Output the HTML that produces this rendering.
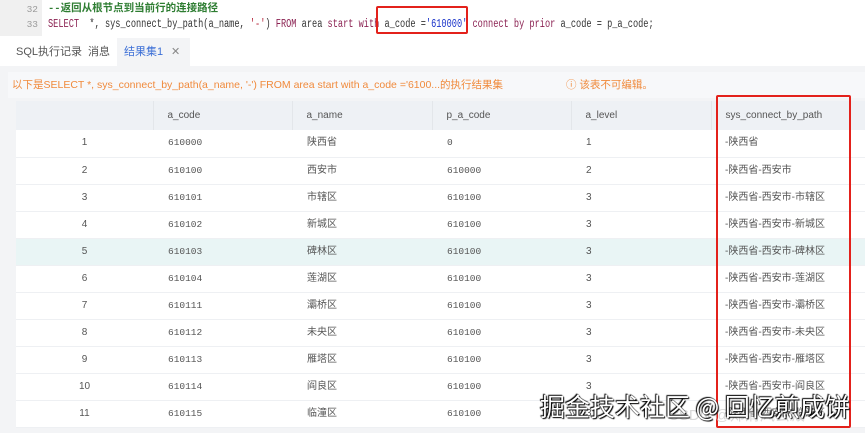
<!DOCTYPE html><html><head><meta charset="utf-8"><style>
*{margin:0;padding:0;box-sizing:border-box}
body{width:865px;height:433px;overflow:hidden;background:#f3f4f6;font-family:"Liberation Sans","Noto Sans CJK SC",sans-serif;position:relative}
.code{position:absolute;left:0;top:0;width:865px;height:36px;background:#fff;font-family:"Liberation Mono","Noto Sans CJK SC",monospace;font-size:10.5px}
.ln{position:absolute;left:0;top:0;width:42px;height:36px;background:#f0f0f0;color:#999;text-align:right;padding-right:4px;font-size:9.5px}
.l{position:absolute;left:48px;height:15px;line-height:15px;white-space:pre;color:#333;transform:scaleX(0.75);transform-origin:0 0;font-size:11.5px}
.tabs{position:absolute;left:0;top:36px;width:865px;height:30px;background:#fff;font-size:11px;color:#555}
.tabs span{position:absolute;top:9px;line-height:14px}
.msg{position:absolute;left:8px;top:72px;width:857px;height:26px;background:#f7f8fa;font-size:10.5px;color:#f08a3c;line-height:26px}
table{position:absolute;left:16px;top:101px;width:849px;border-collapse:collapse;font-size:10px;color:#555;background:#fff;table-layout:fixed}
td{height:27px;border-bottom:1px solid #eef0f3;line-height:12px;vertical-align:middle}
th{height:29px;background:#eef1f5;font-weight:normal;text-align:left;color:#555;border-left:1px solid #e3e6ea;line-height:12px}
.mono{font-family:"Liberation Mono",monospace;font-size:9.5px}
tr.hl td{background:#e9f5f5}
.box{position:absolute;border:2px solid #e3211b;border-radius:2px}
.wm{position:absolute;left:540px;top:388px;font-size:25px;color:#fff;font-family:"Noto Sans CJK SC",sans-serif;text-shadow:0 0 1px #000,1px 1px 1px #000,-1px -1px 1px #000;white-space:nowrap}
</style></head><body>
<div class="code"><div class="ln"><div style="height:15px;line-height:15px;margin-top:2px">32</div><div style="height:15px;line-height:15px">33</div></div>
<div class="l" style="top:2px;color:#2e7d32;font-weight:bold;transform:none;font-size:10.5px">--返回从根节点到当前行的连接路径</div>
<div class="l" style="top:17px"><span style="color:#8b2252">SELECT</span>  *, sys_connect_by_path(a_name, <span style="color:#b5253a">'-'</span>) <span style="color:#8b2252">FROM</span> area <span style="color:#8b2252">start with</span> a_code =<span style="color:#1a33c9">'610000'</span> <span style="color:#8b2252">connect by prior</span> a_code = p_a_code;</div></div>
<div class="tabs"><span style="left:16px">SQL执行记录</span><span style="left:88px">消息</span><div style="position:absolute;left:117px;top:2px;width:73px;height:28px;background:#f3f4f6"></div><span style="left:124px;color:#3c6fd6">结果集1</span><span style="left:171px;color:#888">✕</span></div>
<div class="msg"><span style="position:absolute;left:4px">以下是SELECT *, sys_connect_by_path(a_name, '-') FROM area start with a_code ='6100...的执行结果集</span><span style="position:absolute;left:558px">ⓘ 该表不可编辑。</span></div>
<table>
<tr><th style="width:137px;border-left:none"></th><th style="width:139px;padding-left:14px">a_code</th><th style="width:140px;padding-left:14px">a_name</th><th style="width:139px;padding-left:14px">p_a_code</th><th style="width:140px;padding-left:14px">a_level</th><th style="padding-left:14px">sys_connect_by_path</th></tr>
<tr><td style="text-align:center">1</td><td class="mono" style="padding-left:15px">610000</td><td style="padding-left:15px">陕西省</td><td class="mono" style="padding-left:15px">0</td><td style="padding-left:15px">1</td><td style="padding-left:14px">-陕西省</td></tr>
<tr><td style="text-align:center">2</td><td class="mono" style="padding-left:15px">610100</td><td style="padding-left:15px">西安市</td><td class="mono" style="padding-left:15px">610000</td><td style="padding-left:15px">2</td><td style="padding-left:14px">-陕西省-西安市</td></tr>
<tr><td style="text-align:center">3</td><td class="mono" style="padding-left:15px">610101</td><td style="padding-left:15px">市辖区</td><td class="mono" style="padding-left:15px">610100</td><td style="padding-left:15px">3</td><td style="padding-left:14px">-陕西省-西安市-市辖区</td></tr>
<tr><td style="text-align:center">4</td><td class="mono" style="padding-left:15px">610102</td><td style="padding-left:15px">新城区</td><td class="mono" style="padding-left:15px">610100</td><td style="padding-left:15px">3</td><td style="padding-left:14px">-陕西省-西安市-新城区</td></tr>
<tr class="hl"><td style="text-align:center">5</td><td class="mono" style="padding-left:15px">610103</td><td style="padding-left:15px">碑林区</td><td class="mono" style="padding-left:15px">610100</td><td style="padding-left:15px">3</td><td style="padding-left:14px">-陕西省-西安市-碑林区</td></tr>
<tr><td style="text-align:center">6</td><td class="mono" style="padding-left:15px">610104</td><td style="padding-left:15px">莲湖区</td><td class="mono" style="padding-left:15px">610100</td><td style="padding-left:15px">3</td><td style="padding-left:14px">-陕西省-西安市-莲湖区</td></tr>
<tr><td style="text-align:center">7</td><td class="mono" style="padding-left:15px">610111</td><td style="padding-left:15px">灞桥区</td><td class="mono" style="padding-left:15px">610100</td><td style="padding-left:15px">3</td><td style="padding-left:14px">-陕西省-西安市-灞桥区</td></tr>
<tr><td style="text-align:center">8</td><td class="mono" style="padding-left:15px">610112</td><td style="padding-left:15px">未央区</td><td class="mono" style="padding-left:15px">610100</td><td style="padding-left:15px">3</td><td style="padding-left:14px">-陕西省-西安市-未央区</td></tr>
<tr><td style="text-align:center">9</td><td class="mono" style="padding-left:15px">610113</td><td style="padding-left:15px">雁塔区</td><td class="mono" style="padding-left:15px">610100</td><td style="padding-left:15px">3</td><td style="padding-left:14px">-陕西省-西安市-雁塔区</td></tr>
<tr><td style="text-align:center">10</td><td class="mono" style="padding-left:15px">610114</td><td style="padding-left:15px">阎良区</td><td class="mono" style="padding-left:15px">610100</td><td style="padding-left:15px">3</td><td style="padding-left:14px">-陕西省-西安市-阎良区</td></tr>
<tr><td style="text-align:center">11</td><td class="mono" style="padding-left:15px">610115</td><td style="padding-left:15px">临潼区</td><td class="mono" style="padding-left:15px">610100</td><td style="padding-left:15px">3</td><td style="padding-left:14px">-陕西省-西安市-临潼区</td></tr>
</table>
<div class="box" style="left:376px;top:6px;width:92px;height:28px"></div>
<div class="box" style="left:716px;top:95px;width:135px;height:333px"></div>
<div style="position:absolute;left:668px;top:404px;font-size:15px;color:rgba(200,200,200,.7)">CSDN @郑清风云殿</div>
<div class="wm">掘金技术社区 @ 回忆煎成饼</div>
</body></html>
